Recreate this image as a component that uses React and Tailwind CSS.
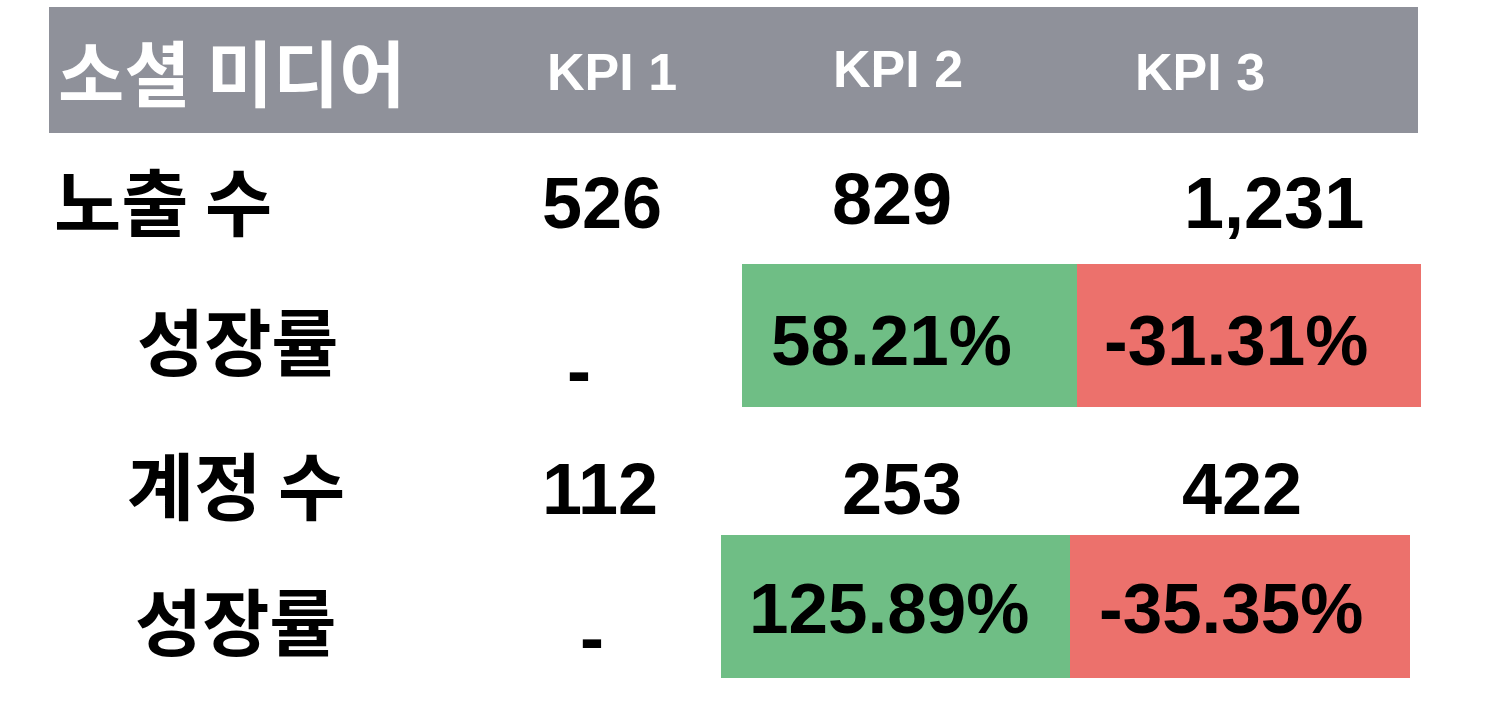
import React from 'react';

const ko = "font-['Noto_Sans_CJK_KR','Noto_Sans',sans-serif] font-bold";
const num = "font-['Liberation_Sans',Arial,sans-serif] font-bold";

const Label = ({ children, className = '' }) => (
  <div className={`${ko} text-[73px] leading-none text-black whitespace-nowrap ${className}`}>{children}</div>
);

const Num = ({ children, className = '' }) => (
  <div className={`${num} text-[72px] leading-none text-black whitespace-nowrap ${className}`}>{children}</div>
);

const Rate = ({ children, tone, className = '' }) => (
  <div
    className={`h-full flex items-center ${tone === 'up' ? 'bg-[#6fbe85]' : 'bg-[#ec716c]'} ${className}`}
  >
    <span className={`${num} text-[71px] leading-none text-black whitespace-nowrap`}>{children}</span>
  </div>
);

export default function App() {
  return (
    <div className="w-[1504px] h-[704px] bg-white overflow-hidden flex flex-col">
      {/* header */}
      <div className="mt-[7px] ml-[49px] w-[1369px] h-[126px] shrink-0 bg-[#8f919a] flex items-center">
        <div className={`${ko} font-semibold w-[498px] pl-[9px] text-[72px] leading-none text-white whitespace-nowrap`}>
          소셜 미디어
        </div>
        <div className={`${num} w-[286px] text-[52px] leading-none text-white mt-[4px]`}>KPI 1</div>
        <div className={`${num} w-[302px] text-[52px] leading-none text-white -mt-[3px]`}>KPI 2</div>
        <div className={`${num} text-[52px] leading-none text-white mt-[4px]`}>KPI 3</div>
      </div>

      {/* 노출 수 */}
      <div className="h-[131px] shrink-0 flex items-center pt-[8px]">
        <Label className="w-[488px] pl-[54px] box-content -mt-[8px]">노출 수</Label>
        <Num className="w-[290px]">526</Num>
        <Num className="w-[352px] -mt-[8px]">829</Num>
        <Num>1,231</Num>
      </div>

      {/* 성장률 */}
      <div className="h-[143px] shrink-0 flex items-center">
        <Label className="w-[433px] pl-[137px] box-content mt-[5px]">성장률</Label>
        <Num className="w-[175px] mt-[69px] -ml-[3px]">-</Num>
        <Rate tone="up" className="w-[335px] pl-[29px] pt-[9px]">58.21%</Rate>
        <Rate tone="down" className="w-[344px] pl-[27px] pt-[9px]">-31.31%</Rate>
      </div>

      {/* 계정 수 */}
      <div className="h-[128px] shrink-0 flex items-center pt-[36px]">
        <Label className="w-[415px] pl-[127px] box-content -mt-[14px]">계정 수</Label>
        <Num className="w-[300px]">112</Num>
        <Num className="w-[340px]">253</Num>
        <Num>422</Num>
      </div>

      {/* 성장률 */}
      <div className="h-[143px] shrink-0 flex items-center">
        <Label className="w-[445px] pl-[135px] box-content mt-[23px]">성장률</Label>
        <Num className="w-[141px] mt-[61px]">-</Num>
        <Rate tone="up" className="w-[349px] pl-[28px] pt-[4px]">125.89%</Rate>
        <Rate tone="down" className="w-[340px] pl-[29px] pt-[4px]">-35.35%</Rate>
      </div>
    </div>
  );
}
